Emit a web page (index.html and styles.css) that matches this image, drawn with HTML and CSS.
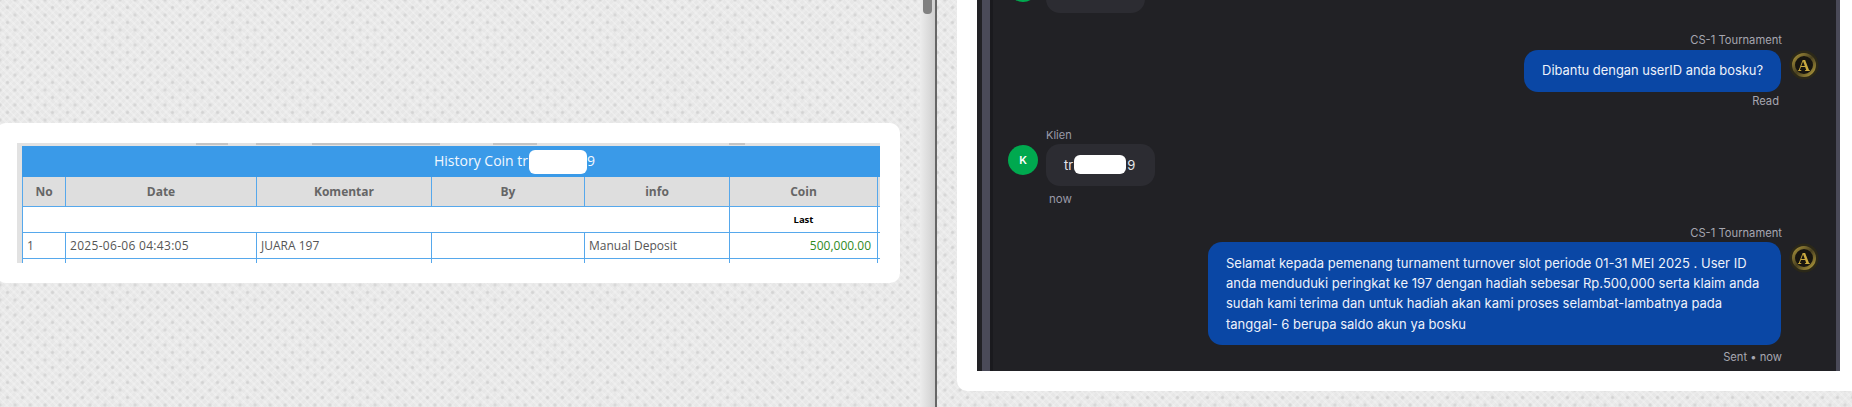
FILE: index.html
```html
<!DOCTYPE html>
<html lang="id">
<head>
<meta charset="utf-8">
<title>History Coin</title>
<link rel="stylesheet" href="styles.css">
</head>
<body>
<div class="page">
  <section class="left-pane">
    <div class="card">
      <div class="sheet">
        <div class="cut-strip"><i class="c1"></i><i class="c2"></i><i class="c3"></i><i class="c4"></i><i class="c5"></i></div>
        <table class="history">
          <colgroup><col class="w1"><col class="w2"><col class="w3"><col class="w4"><col class="w5"><col class="w6"><col class="w7"></colgroup>
          <tr class="title-row"><td colspan="7">History Coin tr<span class="mask mask-title"></span>9</td></tr>
          <tr class="head-row"><th>No</th><th>Date</th><th>Komentar</th><th>By</th><th>info</th><th>Coin</th><th></th></tr>
          <tr class="data-row"><td colspan="5"></td><td class="last">Last</td><td></td></tr>
          <tr class="data-row"><td>1</td><td class="date">2025-06-06 04:43:05</td><td>JUARA 197</td><td></td><td>Manual Deposit</td><td class="coin">500,000.00</td><td></td></tr>
          <tr class="data-row"><td></td><td></td><td></td><td></td><td></td><td></td><td></td></tr>
        </table>
      </div>
    </div>
  </section>
  <div class="scrollbar"><div class="thumb"></div></div>
  <section class="right-pane">
    <div class="chat-card">
      <div class="chat">
        <div class="rail"></div>
        <div class="messages">
          <div class="msg-in first">
            <div class="avatar-green"></div>
            <div class="bubble-in blank"></div>
          </div>
          <div class="msg-out one">
            <div class="out-body">
              <div class="meta">CS-1 Tournament</div>
              <div class="bubble-out">Dibantu dengan userID anda bosku?</div>
              <div class="meta read">Read</div>
            </div>
            <svg class="logo" viewBox="0 0 30 30" aria-hidden="true"><defs><linearGradient id="gold1" x1="0" y1="0" x2="1" y2="1"><stop offset="0" stop-color="#a8923a"/><stop offset=".5" stop-color="#4a4120"/><stop offset="1" stop-color="#b09a3c"/></linearGradient></defs><circle cx="15" cy="15" r="14.5" fill="#2b2818"/><circle cx="15" cy="15" r="10.5" fill="#17150f" stroke="url(#gold1)" stroke-width="3"/><text x="15" y="21" text-anchor="middle" class="logo-a">A</text></svg>
          </div>
          <div class="msg-in two">
            <div class="in-name">Klien</div>
            <div class="in-row">
              <div class="avatar-green">K</div>
              <div class="bubble-in">tr<span class="mask mask-chat"></span>9</div>
            </div>
            <div class="in-time">now</div>
          </div>
          <div class="msg-out three">
            <div class="out-body">
              <div class="meta">CS-1 Tournament</div>
              <div class="bubble-out long">Selamat kepada pemenang turnament turnover slot periode 01-31 MEI 2025 . User ID anda menduduki peringkat ke 197 dengan hadiah sebesar Rp.500,000 serta klaim anda sudah kami terima dan untuk hadiah akan kami proses selambat-lambatnya pada tanggal- 6 berupa saldo akun ya bosku</div>
              <div class="meta sent">Sent • now</div>
            </div>
            <svg class="logo" viewBox="0 0 30 30" aria-hidden="true"><defs><linearGradient id="gold2" x1="0" y1="0" x2="1" y2="1"><stop offset="0" stop-color="#a8923a"/><stop offset=".5" stop-color="#4a4120"/><stop offset="1" stop-color="#b09a3c"/></linearGradient></defs><circle cx="15" cy="15" r="14.5" fill="#2b2818"/><circle cx="15" cy="15" r="10.5" fill="#17150f" stroke="url(#gold2)" stroke-width="3"/><text x="15" y="21" text-anchor="middle" class="logo-a">A</text></svg>
          </div>
        </div>
        <div class="rail-right"></div>
      </div>
    </div>
  </section>
</div>
</body>
</html>
```
FILE: styles.css
```css
* { box-sizing: border-box; }
html, body { margin: 0; height: 100%; overflow: hidden; }
body {
  width: 1852px;
  height: 407px;
  background-color: #e7e7e7;
  background-image:
    radial-gradient(circle, #d3d3d3 0.8px, transparent 2.4px),
    radial-gradient(circle, #d3d3d3 0.8px, transparent 2.4px),
    repeating-linear-gradient(45deg, rgba(255,255,255,.22) 0 2px, transparent 2px 5px),
    repeating-linear-gradient(-45deg, rgba(255,255,255,.16) 0 2px, transparent 2px 5px);
  background-size: 15px 15px, 15px 15px, auto, auto;
  background-position: 0 0, 7.5px 7.5px, 0 0, 0 0;
}
.page { display: flex; height: 407px; }

/* left pane */
.left-pane { width: 920px; flex: none; padding: 123px 0 0 0; overflow: hidden; }
.card {
  width: 904px;
  height: 160px;
  margin-left: -4px;
  padding: 20px 20px 20px 21px;
  background: #fff;
  border-radius: 10px;
}
.sheet { height: 120px; overflow: hidden; background: #e2e2e2; padding-left: 5px; }
.cut-strip { display: flex; height: 3px; }
.cut-strip i { display: block; height: 2px; background: #c4c4c4; }
.c1 { width: 32px; margin-left: 174px; }
.c2 { width: 24px; margin-left: 28px; }
.c3 { width: 128px; margin-left: 32px; }
.c4 { width: 44px; margin-left: 53px; }
.c5 { width: 16px; margin-left: 192px; }
.history {
  table-layout: fixed;
  width: 861px;
  border-collapse: collapse;
  font-family: "Open Sans", "Noto Sans", sans-serif;
  font-size: 12px;
  color: #555;
  background: #fff;
}
.w1 { width: 43px; } .w2 { width: 191px; } .w3 { width: 175px; }
.w4 { width: 153px; } .w5 { width: 145px; } .w6 { width: 148px; } .w7 { width: 11px; }
.history td, .history th { border: 1px solid #56a8ec; padding: 0 4px; overflow: hidden; white-space: nowrap; }
.history .title-row td {
  height: 30px;
  padding: 0 0 0 118px;
  background: #3a9ae8;
  border-color: #3a9ae8;
  color: #f2f8fe;
  text-align: center;
  font-size: 14px;
}
.head-row th {
  height: 30px;
  background: #dedede;
  color: #666;
  font-size: 12px;
  font-weight: 700;
  text-align: center;
}
.data-row td { height: 26px; }
.date { letter-spacing: .3px; }
.last { text-align: center; color: #000; font-size: 9.5px; font-weight: 700; }
.history .coin { text-align: right; color: #2f8a1e; padding-right: 6px; }
.mask { display: inline-block; background: #fff; vertical-align: middle; }
.mask-title { width: 58px; height: 24px; border-radius: 6px; margin-left: 1px; }
.mask-chat { width: 52px; height: 19px; border-radius: 6px; margin: 0 1px 0 1px; }

/* scrollbar */
.scrollbar {
  width: 17px;
  flex: none;
  background: linear-gradient(to right, #ececec, #cfcfcf 88%, #666 88%, #666 98%, transparent 98%);
  padding-left: 3px;
}
.thumb { width: 9px; height: 14px; background: #808080; border-radius: 0 0 4px 4px; }

/* right pane */
.right-pane { flex: 1; min-width: 0; padding-left: 20px; height: 391px; }
.chat-card {
  width: 895px;
  height: 391px;
  padding: 0 12px 20px 20px;
  background: #fff;
  border-radius: 0 0 0 10px;
}
.chat { display: flex; height: 371px; background: #212125; overflow: hidden; }
.rail { width: 11px; flex: none; margin-left: 5px; border-right: 3px solid #1a1a1e; background: #4a4a58; }
.messages {
  flex: 1;
  min-width: 0;
  display: flex;
  flex-direction: column;
  justify-content: flex-end;
  font-family: Inter, "Noto Sans", sans-serif;
  padding-bottom: 7px;
  padding-left: 15px;
}
.rail-right { width: 4px; flex: none; background: #4a4a58; }

.msg-in { display: flex; flex-direction: column; }
.avatar-green {
  width: 30px;
  height: 30px;
  flex: none;
  border-radius: 50%;
  background: #00a94f;
  color: #fff;
  font-size: 11px;
  font-weight: 600;
  display: flex;
  align-items: center;
  justify-content: center;
}
.bubble-in {
  background: #2c2c32;
  color: #e6e6ea;
  font-size: 13px;
  height: 42px;
  border-radius: 14px;
  padding: 0 20px 0 18px;
  margin-left: 8px;
  display: flex;
  align-items: center;
  white-space: nowrap;
}
.first { flex-direction: row; flex: none; height: 0; align-items: flex-end; position: relative; }
.first .avatar-green { margin-bottom: 11px; }
.first .blank { width: 99px; flex: none; padding: 0; }
.in-name { font-size: 11px; color: #9a9aa8; margin-left: 38px; height: 14px; line-height: 14px; }
.in-row { display: flex; align-items: flex-start; margin-top: 2px; }
.in-row .avatar-green { margin-top: 1px; }
.in-time { font-size: 11.5px; color: #9a9aa8; margin: 6px 0 0 41px; height: 14px; line-height: 14px; }

.msg-out { display: flex; justify-content: flex-end; align-items: flex-start; }
.out-body { display: flex; flex-direction: column; align-items: flex-end; }
.meta { font-size: 11.2px; color: #a6a6b0; height: 14px; line-height: 14px; margin-right: -1px; }
.bubble-out {
  background: #0a47a5;
  color: #eef2fb;
  border-radius: 14px;
  font-size: 12.9px;
  margin: 3px 0 2px;
}
.one { margin-top: 20px; }
.one .bubble-out { height: 42px; line-height: 42px; padding: 0 18px; }
.read { margin: 0 2px 0 0; }
.two { margin-top: 20px; }
.three { margin-top: 20px; }
.three .bubble-out { margin-top: 2px; }
.long { width: 573px; padding: 11px 18px 11px 18px; line-height: 20.3px; font-size: 13px; }
.sent { margin-top: 3px; }
.logo { width: 30px; height: 30px; flex: none; margin: 17px 17px 0 8px; filter: blur(.5px); }
.logo-a { font-family: "Liberation Serif", serif; font-size: 17px; font-weight: 700; fill: #c9a93f; }
```
